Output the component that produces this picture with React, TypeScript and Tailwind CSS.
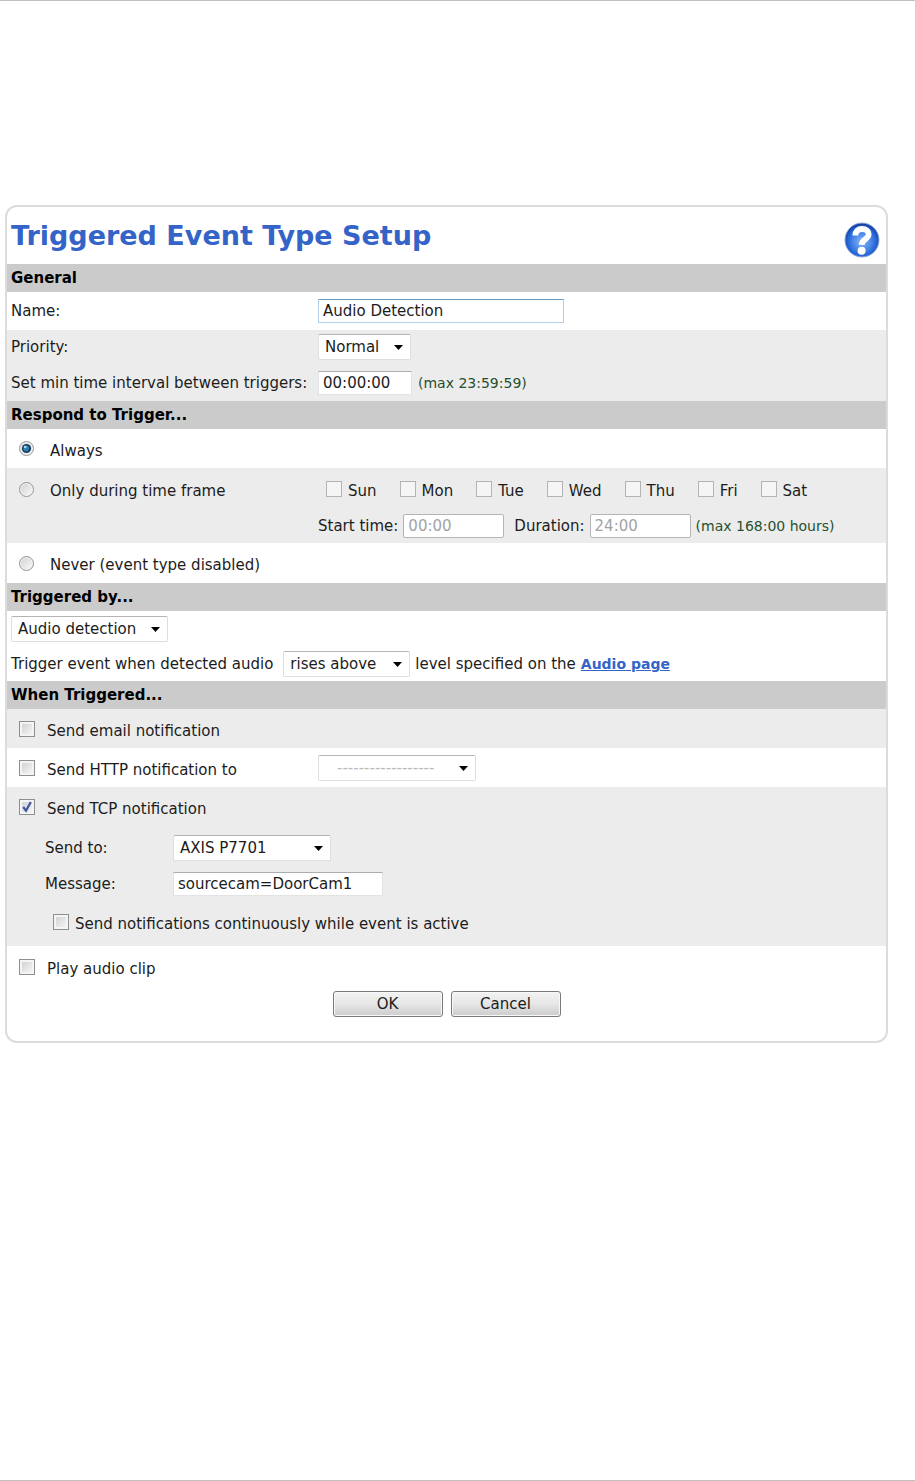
import { useState, type ReactNode } from "react";
import clsx from "clsx";

const DAYS = ["Sun", "Mon", "Tue", "Wed", "Thu", "Fri", "Sat"];

const SectionBar = ({ children }: { children: ReactNode }) => (
  <h2 className="h-7 bg-[#cbcbcb] px-1 text-[15px] leading-7 font-bold text-black">
    {children}
  </h2>
);

const Hint = ({ children }: { children: ReactNode }) => (
  <span className="text-sm text-[#27502f]">{children}</span>
);

const TextField = ({
  id,
  value,
  className,
  disabled,
  active,
}: {
  id: string;
  value: string;
  className?: string;
  disabled?: boolean;
  active?: boolean;
}) => (
  <input
    id={id}
    type="text"
    defaultValue={value}
    disabled={disabled}
    className={clsx(
      "h-6 border bg-white px-1 text-[15px]",
      disabled && "rounded-xs border-[#b5b5b5] text-[#a3a3a3]",
      active && "border-[#b5cfe7] border-t-[#6f9dc0]",
      !disabled && !active && "border-[#e3e3e3] border-t-[#abadb3]",
      className
    )}
  />
);

const SelectField = ({
  id,
  label,
  options,
  className,
  muted,
}: {
  id: string;
  label?: string;
  options: string[];
  className?: string;
  muted?: boolean;
}) => (
  <span className={clsx("relative inline-flex", className)}>
    <select
      id={id}
      aria-label={label}
      className={clsx(
        "h-[26px] w-full appearance-none rounded-xs border border-[#dedede] border-t-[#b4b4b4] bg-white text-[15px]",
        muted ? "pl-[18px] text-[#b9b9b9]" : "pl-[6px]"
      )}
    >
      {options.map((o) => (
        <option key={o}>{o}</option>
      ))}
    </select>
    <svg
      viewBox="0 0 9 5"
      className="pointer-events-none absolute top-[11px] right-2 h-[5px] w-[9px]"
    >
      <path d="M0 0h9L4.5 5z" fill="#000" />
    </svg>
  </span>
);

const CheckBox = ({
  id,
  checked,
  disabled,
}: {
  id: string;
  checked?: boolean;
  disabled?: boolean;
}) => (
  <span className="relative mb-1 inline-flex size-4 shrink-0">
    <input
      id={id}
      type="checkbox"
      defaultChecked={checked}
      disabled={disabled}
      className={clsx(
        "peer size-4 appearance-none border",
        disabled
          ? "border-[#b4b4b4] bg-[#f5f5f5]"
          : "border-[#8e8f8f] bg-linear-to-br from-[#cbcdd0] to-[#fafafa] shadow-[inset_0_0_0_2px_#f4f4f4]"
      )}
    />
    <svg
      viewBox="0 0 16 16"
      className="pointer-events-none absolute inset-0 hidden size-4 peer-checked:block"
    >
      <path
        d="M4.2 8l2.8 3.8L11.8 3"
        fill="none"
        stroke="#42549a"
        strokeWidth="2.2"
      />
    </svg>
  </span>
);

const Radio = ({
  id,
  checked,
  onChange,
}: {
  id: string;
  checked: boolean;
  onChange: () => void;
}) => (
  <span className="relative mb-1 inline-flex size-[15px] shrink-0">
    <input
      id={id}
      type="radio"
      name="respond"
      checked={checked}
      onChange={onChange}
      className="peer size-[15px] appearance-none rounded-full border border-[#959595] bg-linear-to-br from-[#cfd1d3] to-[#fafafa] shadow-[inset_0_0_0_1px_#f4f4f4]"
    />
    <svg
      viewBox="0 0 15 15"
      className="pointer-events-none absolute inset-0 hidden size-[15px] peer-checked:block"
    >
      <circle cx="7.5" cy="7.5" r="4.6" fill="#17405f" />
      <circle cx="7.2" cy="7.4" r="2.8" fill="#2f7fae" />
      <circle cx="6.2" cy="6" r="1.3" fill="#b6dbee" />
    </svg>
  </span>
);

const HelpIcon = () => (
  <svg viewBox="0 0 36 36" className="size-9">
    <defs>
      <radialGradient id="ball" cx="50%" cy="55%" r="52%">
        <stop offset="0" stopColor="#8db8f6" />
        <stop offset="0.55" stopColor="#4583e6" />
        <stop offset="0.85" stopColor="#1f5fd2" />
        <stop offset="1" stopColor="#153f9e" />
      </radialGradient>
    </defs>
    <circle cx="18" cy="18" r="17" fill="url(#ball)" stroke="#8fa9d6" />
    <path
      d="M11.4 13.4C11.4 9 14 7 18 7c4.2 0 6.6 2 6.6 5.2 0 5-6.8 5-7 10.6"
      fill="none"
      stroke="#fff"
      strokeWidth="5.8"
    />
    <circle cx="17.6" cy="28.8" r="4" fill="#fff" />
  </svg>
);

const App = () => {
  const [respond, setRespond] = useState("always");

  return (
    <div className="flex min-h-screen flex-col border-y border-[#bfbfbf] bg-white pt-[204px] pr-[27px] pl-[5px] font-['DejaVu_Sans',Verdana,sans-serif] text-[15px] leading-5 text-[#1c1c1c]">
      <form
        onSubmit={(e) => e.preventDefault()}
        className="rounded-xl border-2 border-[#dcdcdc] bg-white pb-6"
      >
        <header className="flex h-[57px] items-center justify-between pr-1.5 pl-1">
          <h1 className="text-[27px] font-bold text-[#3464c8]">
            Triggered Event Type Setup
          </h1>
          <button type="button" aria-label="Help" className="mt-2">
            <HelpIcon />
          </button>
        </header>

        <SectionBar>General</SectionBar>
        <div className="flex h-[38px] items-center px-1">
          <label htmlFor="name" className="w-[307px]">
            Name:
          </label>
          <TextField
            id="name"
            value="Audio Detection"
            active
            className="w-[246px]"
          />
        </div>
        <div className="bg-[#ececec] px-1">
          <div className="flex h-[34px] items-center">
            <label htmlFor="priority" className="w-[307px]">
              Priority:
            </label>
            <SelectField
              id="priority"
              options={["Normal", "Low", "High"]}
              className="w-[93px]"
            />
          </div>
          <div className="flex h-[37px] items-center">
            <label htmlFor="interval" className="w-[307px]">
              Set min time interval between triggers:
            </label>
            <TextField
              id="interval"
              value="00:00:00"
              className="mr-1.5 w-[94px]"
            />
            <Hint>(max 23:59:59)</Hint>
          </div>
        </div>

        <SectionBar>Respond to Trigger...</SectionBar>
        <div className="flex h-[39px] items-center pt-1 pl-3">
          <Radio
            id="always"
            checked={respond === "always"}
            onChange={() => setRespond("always")}
          />
          <label htmlFor="always" className="ml-4">
            Always
          </label>
        </div>
        <div className="flex h-[75px] bg-[#ececec] pl-3">
          <div className="flex h-[42px] w-[299px] items-center pt-1">
            <Radio
              id="frame"
              checked={respond === "frame"}
              onChange={() => setRespond("frame")}
            />
            <label htmlFor="frame" className="ml-4">
              Only during time frame
            </label>
          </div>
          <div>
            <div className="flex h-[42px] items-center gap-[23px] pt-1 pl-2">
              {DAYS.map((day) => (
                <span key={day} className="flex items-center gap-1.5">
                  <CheckBox id={day} disabled />
                  <label htmlFor={day}>{day}</label>
                </span>
              ))}
            </div>
            <div className="flex items-center pt-1">
              <label htmlFor="start">Start time:</label>
              <TextField
                id="start"
                value="00:00"
                disabled
                className="mr-2.5 ml-[5px] w-[101px]"
              />
              <label htmlFor="duration">Duration:</label>
              <TextField
                id="duration"
                value="24:00"
                disabled
                className="mr-[5px] ml-[5px] w-[101px]"
              />
              <Hint>(max 168:00 hours)</Hint>
            </div>
          </div>
        </div>
        <div className="flex h-10 items-center pt-1 pl-3">
          <Radio
            id="never"
            checked={respond === "never"}
            onChange={() => setRespond("never")}
          />
          <label htmlFor="never" className="ml-4">
            Never (event type disabled)
          </label>
        </div>

        <SectionBar>Triggered by...</SectionBar>
        <div className="h-[70px] px-1 pt-[5px]">
          <SelectField
            id="source"
            label="Triggered by"
            options={["Audio detection", "Motion detection"]}
            className="w-[157px]"
          />
          <div className="mt-[9px] flex items-center">
            <label htmlFor="direction">Trigger event when detected audio</label>
            <SelectField
              id="direction"
              options={["rises above", "falls below"]}
              className="mr-[5px] ml-2.5 w-[127px]"
            />
            <span>level specified on the</span>
            <a
              href="#audio"
              className="ml-[5px] text-sm font-bold text-[#3464c8] underline"
            >
              Audio page
            </a>
          </div>
        </div>

        <SectionBar>When Triggered...</SectionBar>
        <div className="flex h-[39px] items-center gap-3 bg-[#ececec] pt-1 pl-3">
          <CheckBox id="email" />
          <label htmlFor="email">Send email notification</label>
        </div>
        <div className="flex h-[39px] items-center pl-3">
          <div className="flex w-[299px] items-center gap-3 pt-1">
            <CheckBox id="http" />
            <label htmlFor="http">Send HTTP notification to</label>
          </div>
          <SelectField
            id="http-server"
            label="HTTP server"
            options={["------------------"]}
            className="w-[158px]"
            muted
          />
        </div>
        <div className="h-[159px] bg-[#ececec] pl-3">
          <div className="flex h-[43px] items-center gap-3">
            <CheckBox id="tcp" checked />
            <label htmlFor="tcp">Send TCP notification</label>
          </div>
          <div className="flex h-9 items-center pl-[26px]">
            <label htmlFor="send-to" className="w-32">
              Send to:
            </label>
            <SelectField
              id="send-to"
              options={["AXIS P7701"]}
              className="w-[158px]"
            />
          </div>
          <div className="flex h-9 items-center pl-[26px]">
            <label htmlFor="message" className="w-32">
              Message:
            </label>
            <TextField
              id="message"
              value="sourcecam=DoorCam1"
              className="w-[210px]"
            />
          </div>
          <div className="flex h-11 items-center gap-1.5 pl-[34px]">
            <CheckBox id="continuous" />
            <label htmlFor="continuous">
              Send notifications continuously while event is active
            </label>
          </div>
        </div>
        <div className="flex h-[45px] items-center gap-3 pl-3">
          <CheckBox id="clip" />
          <label htmlFor="clip">Play audio clip</label>
        </div>

        <div className="flex justify-center gap-2">
          {["OK", "Cancel"].map((text) => (
            <button
              key={text}
              type="submit"
              className="h-[26px] w-[110px] rounded-[3px] border border-[#7a7a7a] bg-linear-to-b from-[#f3f3f3] via-[#e6e6e6] to-[#cccccc] text-[15px] leading-5 shadow-[inset_0_0_0_1px_#f8f8f8]"
            >
              {text}
            </button>
          ))}
        </div>
      </form>
    </div>
  );
};

export default App;
